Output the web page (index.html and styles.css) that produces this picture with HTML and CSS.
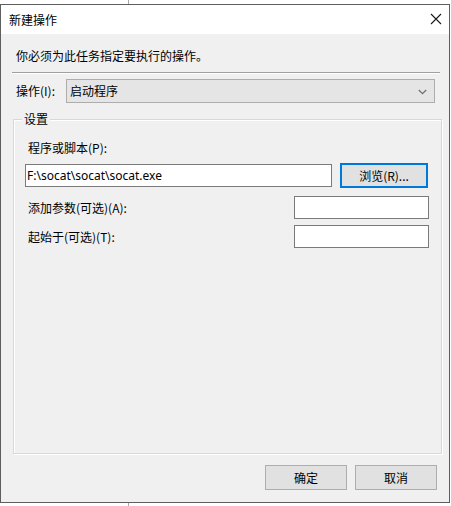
FILE: index.html
```html
<!DOCTYPE html>
<html lang="zh-CN">
<head>
<meta charset="utf-8">
<title>新建操作</title>
<link rel="stylesheet" href="styles.css">
</head>
<body>
<div class="window">
  <div class="titlebar">
    <span class="title">新建操作</span>
    <span class="close" aria-label="关闭">
      <svg width="12" height="12" viewBox="0 0 12 12"><path d="M1 1 L11 11 M11 1 L1 11" stroke="#1a1a1a" stroke-width="1.1" fill="none"/></svg>
    </span>
  </div>
  <div class="content">
    <div class="intro">你必须为此任务指定要执行的操作。</div>
    <div class="sep"></div>
    <div class="action-row">
      <span class="label">操作(I):</span>
      <div class="combo">
        <span>启动程序</span>
        <svg class="chev" width="9" height="6" viewBox="0 0 9 6"><path d="M0.8 1 L4.5 4.6 L8.2 1" stroke="#707070" stroke-width="1.3" fill="none"/></svg>
      </div>
    </div>
    <div class="group">
      <span class="legend">设置</span>
      <div class="label prog-label">程序或脚本(P):</div>
      <div class="prog-row">
        <div class="textbox prog">F:\socat\socat\socat.exe</div>
        <div class="btn browse">浏览(R)...</div>
      </div>
      <div class="opt-row first">
        <span class="label">添加参数(可选)(A):</span>
        <div class="textbox small"></div>
      </div>
      <div class="opt-row">
        <span class="label">起始于(可选)(T):</span>
        <div class="textbox small"></div>
      </div>
    </div>
    <div class="buttons">
      <div class="btn ok">确定</div>
      <div class="btn cancel">取消</div>
    </div>
  </div>
</div>
</body>
</html>
```

FILE: styles.css
```css
html, body {
  margin: 0;
  padding: 0;
}
body {
  width: 451px;
  height: 506px;
  overflow: hidden;
  background: #ffffff linear-gradient(to right, transparent 128px, #a8a8a8 128px, #a8a8a8 129px, transparent 129px);
  font-family: "Segoe UI", "Noto Sans", "Noto Sans CJK SC", sans-serif;
  font-size: 12px;
  color: #000;
}
.window {
  margin-top: 4px;
  width: 450px;
  height: 499px;
  box-sizing: border-box;
  border: 1px solid #5e5e5e;
  display: flex;
  flex-direction: column;
  background: #f0f0f0;
}
.titlebar {
  height: 29px;
  flex: none;
  background: #ffffff;
  display: flex;
  align-items: center;
  justify-content: space-between;
  padding-left: 8px;
  padding-right: 7px;
}
.title {
  font-family: "Noto Sans CJK SC", sans-serif;
  font-size: 12px;
  line-height: 16px;
  color: #000;
}
.close {
  display: flex;
  width: 12px;
  height: 12px;
  margin-top: -2px;
}
.content {
  flex: 1;
  display: flex;
  flex-direction: column;
  padding: 14px 0 0 0;
}
.label, .intro, .combo span, .legend, .btn {
  font-family: "Noto Sans CJK SC", sans-serif;
  font-size: 12px;
  line-height: 16px;
}
.intro {
  padding-left: 15px;
  height: 16px;
}
.sep {
  margin: 8px 0 0 11px;
  width: 428px;
  height: 1px;
  background: #a0a0a0;
  box-shadow: 0 1px 0 #ffffff;
}
.action-row {
  margin-top: 6px;
  display: flex;
  align-items: center;
  padding-left: 15px;
}
.action-row .label {
  width: 50px;
}
.combo {
  width: 369px;
  height: 24px;
  box-sizing: border-box;
  border: 1px solid #adadad;
  background: #e5e5e5;
  display: flex;
  align-items: center;
  justify-content: space-between;
  padding: 0 7px 0 3px;
}
.chev {
  display: block;
  margin-top: 1px;
}
.group {
  margin: 16px 0 0 12px;
  width: 429px;
  height: 335px;
  box-sizing: border-box;
  border: 1px solid #d8d8d8;
  box-shadow: inset 1px 1px 0 #ffffff, 1px 1px 0 #ffffff;
  display: flex;
  flex-direction: column;
  padding: 20px 0 0 11px;
}
.legend {
  align-self: flex-start;
  margin: -29px 0 13px -3px;
  padding: 0 2px 0 2px;
  background: #f0f0f0;
}
.prog-label {
  margin-left: 3px;
  margin-top: 0;
}
.prog-row {
  margin-top: 7px;
  display: flex;
  align-items: center;
}
.textbox {
  height: 23px;
  box-sizing: border-box;
  border: 1px solid #7a7a7a;
  background: #ffffff;
  display: flex;
  align-items: center;
  padding-left: 1px;
  font-family: "Segoe UI", "Noto Sans", "Liberation Sans", sans-serif;
  font-size: 12px;
}
.textbox.prog {
  width: 307px;
  letter-spacing: 0;
}
.btn {
  box-sizing: border-box;
  border: 1px solid #adadad;
  background: #e1e1e1;
  display: flex;
  align-items: center;
  justify-content: center;
}
.browse {
  margin-left: 8px;
  width: 88px;
  height: 25px;
  border: 2px solid #0078d7;
  font-family: "Noto Sans CJK SC", sans-serif;
}
.opt-row {
  display: flex;
  align-items: center;
  justify-content: space-between;
  padding-left: 3px;
  padding-right: 12px;
  margin-top: 6px;
}
.opt-row.first {
  margin-top: 8px;
}
.textbox.small {
  width: 135px;
}
.buttons {
  margin-top: 11px;
  display: flex;
  justify-content: flex-end;
  gap: 8px;
  padding-right: 12px;
}
.ok, .cancel {
  width: 82px;
  height: 25px;
}
```
